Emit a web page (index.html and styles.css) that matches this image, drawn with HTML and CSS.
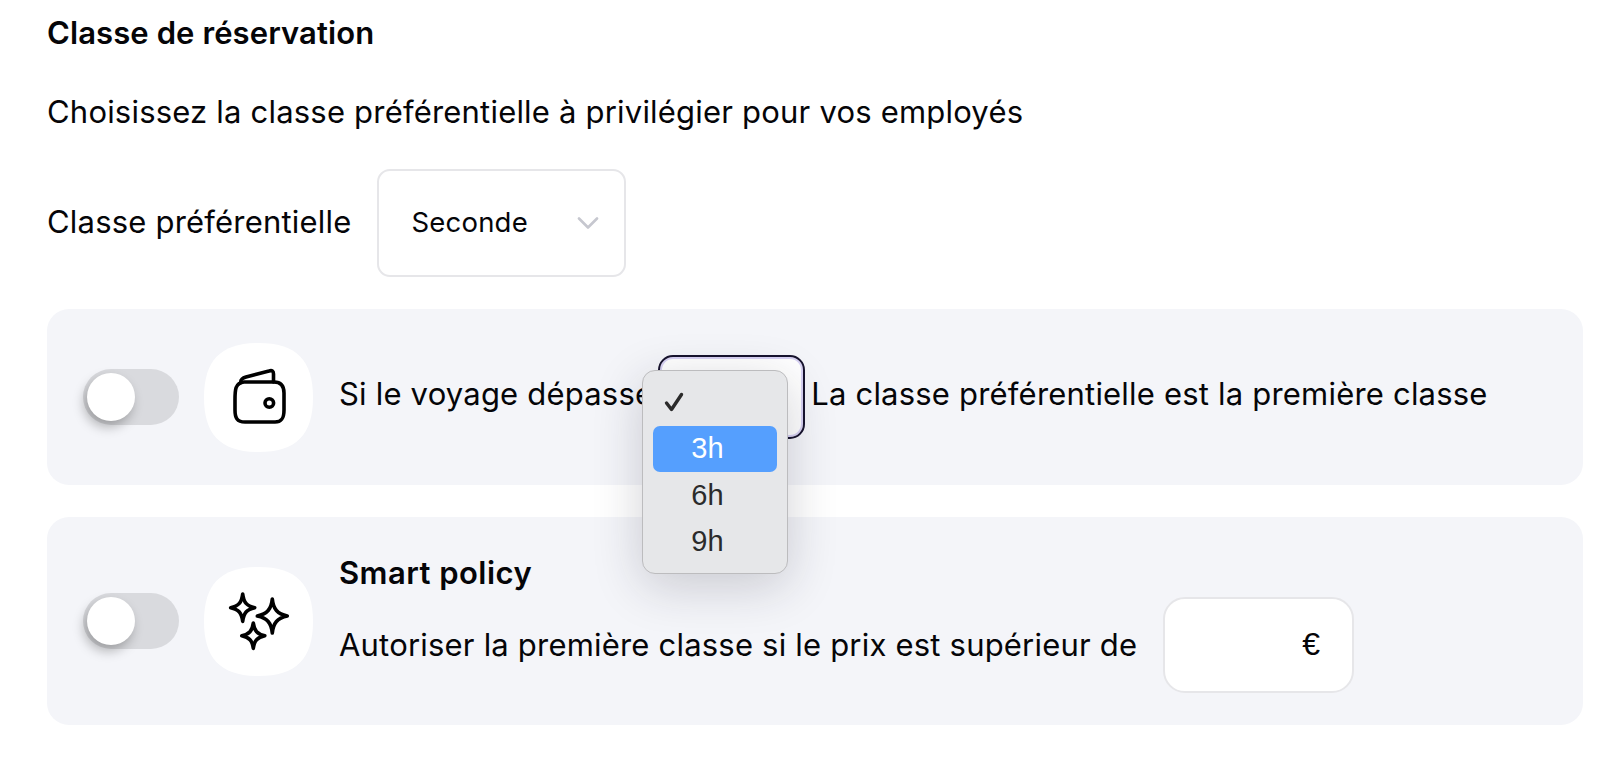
FILE: index.html
```html
<!DOCTYPE html>
<html lang="fr">
<head>
  <meta charset="UTF-8">
  <title>Classe de réservation</title>
  <link rel="stylesheet" href="styles.css">
</head>
<body>
  <div class="page">
    <h2 class="title">Classe de réservation</h2>
    <p class="intro">Choisissez la classe préférentielle à privilégier pour vos employés</p>

    <div class="pref-row">
      <span class="pref-label">Classe préférentielle</span>
      <div class="select">
        <span class="pref-value">Seconde</span>
        <svg class="chevron" width="22" height="12" viewBox="0 0 22 12"><path d="M2 1.5l9 9 9-9" fill="none" stroke="#c6c7cf" stroke-width="2.6" stroke-linecap="round" stroke-linejoin="round"/></svg>
      </div>
    </div>

    <div class="card card-first">
      <div class="toggle"><div class="knob"></div></div>
      <svg class="tile" width="109" height="109" viewBox="0 0 109 109">
        <path d="M54.5 0C92 0 109 17 109 54.5S92 109 54.5 109 0 92 0 54.5 17 0 54.5 0z" fill="#fff"/>
        <g fill="none" stroke="#000" stroke-width="3.6" stroke-linecap="round" stroke-linejoin="round">
          <path d="M31 57c0-10 0-17 9-18h30c8 0 10 5 10 11v17c0 8-2 12-9 12H41c-8 0-10-4-10-12z"/>
          <path d="M37 39.500c-1-3 2-4.500 5-5.500l23-6c3-1 4.500 0 4.500 3v8"/>
          <circle cx="65.300" cy="60" r="4.300"/>
        </g>
      </svg>
      <div class="line">
        <span class="line-text">Si le voyage dépasse</span>
        <div class="hours">
          <div class="hours-input"></div>
          <div class="menu">
            <div class="menu-item"><svg class="check" width="20" height="20" viewBox="0 0 20 20"><path d="M2.500 11l5 6.500L17.500 2.500" fill="none" stroke="#2b2b2b" stroke-width="3.4" stroke-linecap="round" stroke-linejoin="round"/></svg></div>
            <div class="menu-item menu-item-active">3h</div>
            <div class="menu-item">6h</div>
            <div class="menu-item">9h</div>
          </div>
        </div>
        <span class="line-text">La classe préférentielle est la première classe</span>
      </div>
    </div>

    <div class="card card-second">
      <div class="toggle"><div class="knob"></div></div>
      <svg class="tile" width="109" height="109" viewBox="0 0 109 109">
        <path d="M54.5 0C92 0 109 17 109 54.5S92 109 54.5 109 0 92 0 54.5 17 0 54.5 0z" fill="#fff"/>
        <g fill="none" stroke="#000" stroke-width="3.6" stroke-linecap="round" stroke-linejoin="round">
          <path d="M68.300 32c1 10 5 15 15 17-10 2-14 7-15 17-1-10-5-15-15-17 10-2 14-7 15-17z"/>
          <path d="M38.700 27c1 8.500 4 12 12 13.700-8 1.700-11 5.200-12 13.700-1-8.500-4-12-12-13.700 8-1.700 11-5.200 12-13.700z"/>
          <path d="M49.300 56c1 8 4 11 11.500 12.700-7.500 1.700-10.500 4.700-11.500 12.700-1-8-4-11-11.500-12.700 7.500-1.700 10.500-4.700 11.500-12.700z"/>
        </g>
      </svg>
      <div class="smart">
        <div class="smart-title">Smart policy</div>
        <div class="line">
          <span class="line-text-small">Autoriser la première classe si le prix est supérieur de</span>
          <div class="price"><span>€</span></div>
        </div>
      </div>
    </div>
  </div>
</body>
</html>
```

FILE: styles.css
```css
body {
  margin: 0;
  background: #fff;
  color: #050508;
  font-family: Inter, sans-serif;
  font-size: 31px;
  letter-spacing: 0.2px;
  overflow: hidden;
}
.page {
  padding: 14px 30px 0 47px;
}
.title {
  margin: 0;
  font-size: 31px;
  line-height: 38px;
  font-weight: 600;
  letter-spacing: 0.1px;
}
.intro {
  margin: 40px 0 0;
  line-height: 40px;
}
.pref-row {
  display: flex;
  align-items: center;
  gap: 26px;
  margin-top: 37px;
}
.pref-label {
  margin-bottom: 3px;
}
.pref-value {
  margin-bottom: 2px;
}
.select {
  box-sizing: border-box;
  width: 249px;
  height: 108px;
  padding: 0 25px 0 32px;
  display: flex;
  align-items: center;
  justify-content: space-between;
  border: 2px solid #e6e6e9;
  border-radius: 13px;
  font-size: 27.5px;
}
.card {
  display: flex;
  align-items: center;
  padding-left: 36px;
  background: #f4f5f9;
  border-radius: 22px;
}
.card-first {
  height: 176px;
  margin-top: 32px;
}
.card-second {
  height: 208px;
  margin-top: 32px;
}
.toggle {
  flex: none;
  width: 96px;
  height: 56px;
  padding: 4px;
  box-sizing: border-box;
  background: #d9dade;
  border-radius: 28px;
}
.knob {
  width: 48px;
  height: 48px;
  background: #fff;
  border-radius: 50%;
  box-shadow: -3px 6px 12px rgba(0, 0, 0, 0.28);
}
.tile {
  flex: none;
  margin: 0 26px 0 25px;
}
.line {
  display: flex;
  align-items: center;
}
.line-text {
  margin-bottom: 8px;
}
.line-text-small {
  margin-bottom: 0;
}
.hours {
  position: relative;
  margin: 0 6px 0 5px;
}
.hours-input {
  box-sizing: border-box;
  width: 147px;
  height: 84px;
  background: #fff;
  border: 2px solid #17132e;
  border-radius: 15px;
  box-shadow: inset 0 0 0 2px #d8d2f4;
}
.menu {
  position: absolute;
  left: -16px;
  top: 15px;
  box-sizing: border-box;
  width: 146px;
  height: 204px;
  padding: 8px 10px;
  background: #e6e7e9;
  border: 1px solid #bcbcbe;
  border-radius: 13px;
  box-shadow: 0 12px 50px rgba(30, 30, 50, 0.2);
  font-family: "Liberation Sans", sans-serif;
  font-size: 29px;
  color: #2b2b2b;
}
.menu-item {
  height: 46.5px;
  padding-left: 38px;
  display: flex;
  align-items: center;
  border-radius: 7px;
}
.menu-item-active {
  background: #559ffe;
  color: #fff;
}
.check {
  margin-left: -27px;
}
.smart {
  display: flex;
  flex-direction: column;
  margin-top: 3px;
}
.smart-title {
  font-weight: 600;
  line-height: 40px;
  margin-bottom: 4px;
  letter-spacing: 0.45px;
}
.price {
  box-sizing: border-box;
  width: 191px;
  height: 96px;
  margin-left: 26px;
  padding-right: 32px;
  display: flex;
  align-items: center;
  justify-content: flex-end;
  background: #fff;
  border: 2px solid #e6e6e9;
  border-radius: 22px;
  font-family: "Liberation Sans", sans-serif;
  font-size: 32px;
}
```
